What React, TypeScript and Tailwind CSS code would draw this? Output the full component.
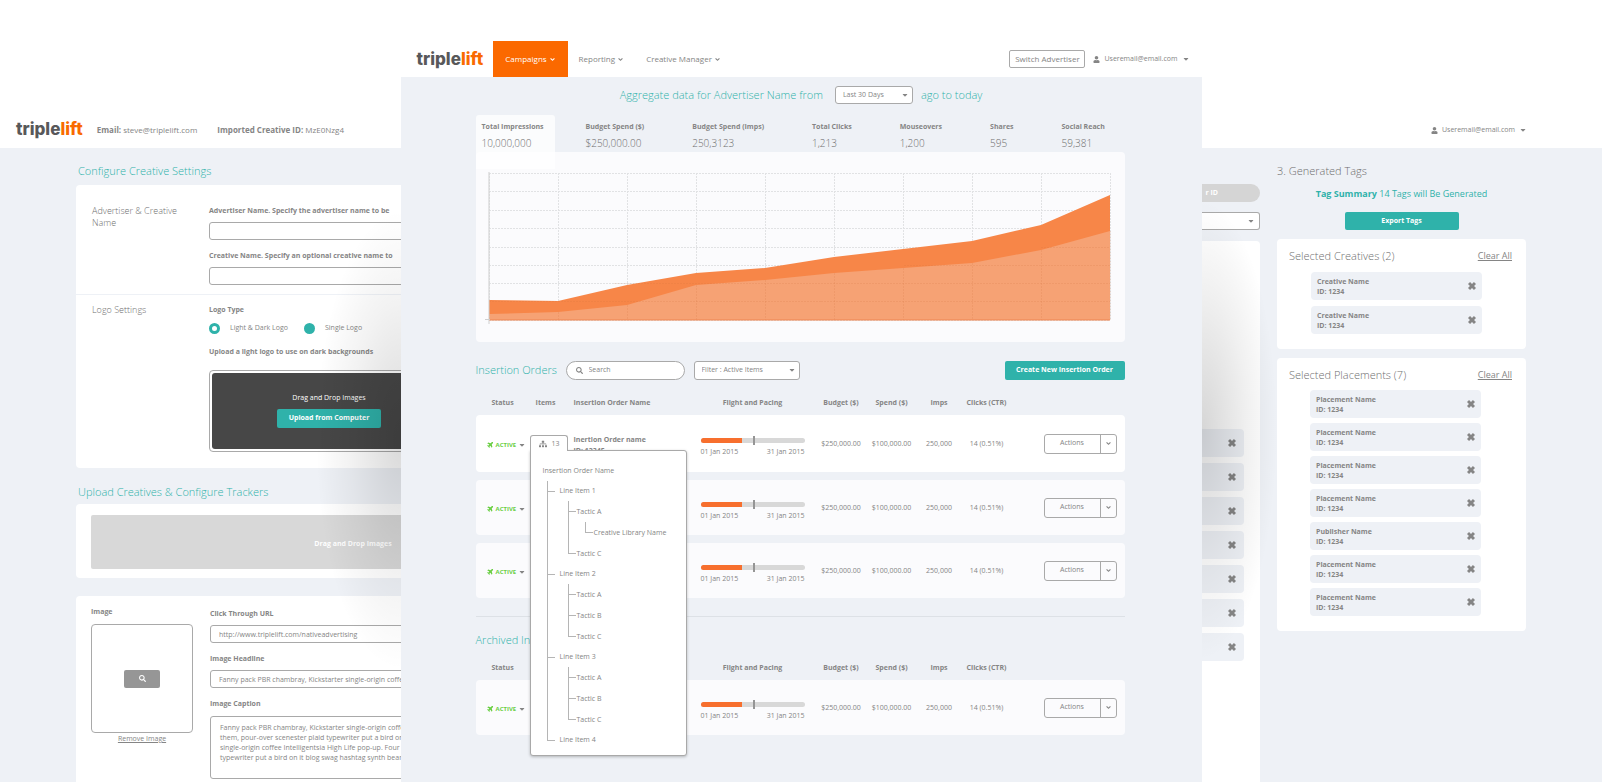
import { FaAngleDown, FaCaretDown, FaPlane, FaSearch, FaSitemap, FaUser } from "react-icons/fa";

const METRICS = [
  { label: "Total Impressions", value: "10,000,000" },
  { label: "Budget Spend ($)", value: "$250,000.00" },
  { label: "Budget Spend (Imps)", value: "250,3123" },
  { label: "Total Clicks", value: "1,213" },
  { label: "Mouseovers", value: "1,200" },
  { label: "Shares", value: "595" },
  { label: "Social Reach", value: "59,381" },
];

const TREE = [
  { name: "Line Item 1", tactics: [{ name: "Tactic A", creative: "Creative Library Name" }, { name: "Tactic C" }] },
  { name: "Line Item 2", tactics: [{ name: "Tactic A" }, { name: "Tactic B" }, { name: "Tactic C" }] },
  { name: "Line Item 3", tactics: [{ name: "Tactic A" }, { name: "Tactic B" }, { name: "Tactic C" }] },
  { name: "Line Item 4", tactics: [] },
] as { name: string; tactics: { name: string; creative?: string }[] }[];

const PLACEMENTS = [
  "Placement Name",
  "Placement Name",
  "Placement Name",
  "Placement Name",
  "Publisher Name",
  "Placement Name",
  "Placement Name",
];

const CAPTION = `Fanny pack PBR chambray, Kickstarter single-origin coffee
them, pour-over scenester plaid typewriter put a bird on it
single-origin coffee Intelligentsia High Life pop-up. Four loko
typewriter put a bird on it blog swag hashtag synth beard`;

function Logo() {
  return (
    <a href="#" className="font-[Inter,sans-serif] text-[17px] leading-5 font-extrabold text-[#58585a]">
      triple<span className="text-[#f96a00]">lift</span>
    </a>
  );
}

function Cross() {
  return (
    <svg viewBox="0 0 14 14" className="size-2" fill="#858585">
      <path d="M3.6 0 7 3.4 10.400 0 14 3.600 10.600 7 14 10.400 10.400 14 7 10.600 3.600 14 0 10.400 3.400 7 0 3.600z" />
    </svg>
  );
}

function UserMenu() {
  return (
    <button className="flex items-center text-[7px] leading-3">
      <FaUser className="mr-1 size-[7px]" />
      Useremail@email.com
      <FaCaretDown className="ml-1 size-2" />
    </button>
  );
}

function Select({ label, value, className }: { label: string; value: string; className: string }) {
  return (
    <div className={`relative ${className}`}>
      <select aria-label={label} className="block size-full appearance-none rounded-[3px] border border-[#a9a9a9] bg-white pl-[7px] text-[7px] font-normal outline-none">
        <option>{value}</option>
      </select>
      <FaCaretDown className="pointer-events-none absolute top-1/2 right-1 size-2 -translate-y-1/2" />
    </div>
  );
}

function Field({ id, label, value }: { id: string; label: string; value?: string }) {
  return (
    <div>
      <label htmlFor={id} className="block text-[7px] leading-3 font-bold">{label}</label>
      <input id={id} defaultValue={value} className="mt-[5px] block h-[18px] w-full rounded-[3px] border border-[#a9a9a9] bg-white px-2 text-[7px] outline-none" />
    </div>
  );
}

function CreativeSettings() {
  return (
    <section className="relative flex min-w-0 flex-col overflow-hidden whitespace-nowrap">
      <header className="flex h-[148px] shrink-0 items-end gap-5 bg-white pb-[9px] pl-4">
        <Logo />
        <p className="-ml-1.5 pb-[3px] text-[8px] leading-3"><b>Email:</b> steve@triplelift.com</p>
        <p className="pb-[3px] text-[8px] leading-3"><b>Imported Creative ID:</b> MzE0Nzg4</p>
      </header>

      <div className="flex w-[560px] flex-1 flex-col pl-19">
        <h2 className="mt-[15px] pl-0.5 text-[11px] leading-4 font-light text-[#2fb2aa]">Configure Creative Settings</h2>
        <div className="mt-[6px] rounded-[4px] bg-white">
          <div className="flex h-[109px] pt-5 pl-4">
            <h3 className="w-[117px] text-[9px] leading-3 font-light text-[#6f6f6f]">Advertiser &amp; Creative<br />Name</h3>
            <div className="flex w-60 flex-col gap-[10px]">
              <Field id="advertiser" label="Advertiser Name. Specify the advertiser name to be" />
              <Field id="creative" label="Creative Name. Specify an optional creative name to" />
            </div>
          </div>
          <div className="flex h-[174px] border-t border-[#eef1f6] pt-[9px] pl-4">
            <h3 className="w-[117px] text-[9px] leading-3 font-light text-[#6f6f6f]">Logo Settings</h3>
            <div className="w-60">
              <p className="text-[7px] leading-3 font-bold">Logo Type</p>
              <div className="mt-1.5 flex items-center text-[7px] leading-3">
                <label className="flex w-[95px] items-center gap-2.5">
                  <input type="radio" name="logo" defaultChecked className="size-[11px] appearance-none rounded-full border-[3px] border-[#2fb2aa] bg-white" />
                  Light &amp; Dark Logo
                </label>
                <label className="flex items-center gap-2.5">
                  <input type="radio" name="logo" className="size-[11px] appearance-none rounded-full bg-[#2fb2aa]" />
                  Single Logo
                </label>
              </div>
              <p className="mt-3 text-[7px] leading-3 font-bold">Upload a light logo to use on dark backgrounds</p>
              <div className="mt-3 rounded-[4px] border border-[#a9a9a9] p-0.5">
                <div className="flex h-[76px] flex-col items-center rounded-[3px] bg-[#474747] pt-[19px] text-white">
                  <p className="text-[7px] leading-3">Drag and Drop Images</p>
                  <button className="mt-[5px] h-[19px] w-[104px] rounded-[2px] bg-[#2fb2aa] text-[7px] font-bold">Upload from Computer</button>
                </div>
              </div>
            </div>
          </div>
        </div>

        <h2 className="mt-4 pl-0.5 text-[11px] leading-4 font-light text-[#2fb2aa]">Upload Creatives &amp; Configure Trackers</h2>
        <div className="mt-1 h-[74px] rounded-[4px] bg-white pt-[11px] pl-[15px]">
          <div className="flex h-[54px] w-[524px] items-center justify-center rounded-[2px] bg-[#d8d8d8] pt-1 text-[7px] font-bold text-white">Drag and Drop Images</div>
        </div>

        <div className="mt-[18px] flex flex-1 rounded-tl-[4px] bg-white pt-[10px] pl-[15px]">
          <div className="w-[119px]">
            <p className="text-[7px] leading-3 font-bold">Image</p>
            <div className="mt-[6px] flex h-[109px] w-[102px] items-center justify-center rounded-[4px] border border-[#a9a9a9]">
              <button aria-label="Preview image" className="flex h-[18px] w-[36px] items-center justify-center rounded-[2px] bg-[#969696] text-white">
                <FaSearch className="size-[7px]" />
              </button>
            </div>
            <a href="#" className="block w-[102px] text-center text-[7px] leading-3 underline">Remove Image</a>
          </div>
          <div className="flex w-[340px] flex-col gap-[10px] pt-0.5">
            <Field id="url" label="Click Through URL" value="http://www.triplelift.com/nativeadvertising" />
            <Field id="headline" label="Image Headline" value="Fanny pack PBR chambray, Kickstarter single-origin coffee" />
            <div>
              <label htmlFor="caption" className="block text-[7px] leading-3 font-bold">Image Caption</label>
              <textarea id="caption" defaultValue={CAPTION} className="mt-[6px] block h-[63px] w-full resize-none overflow-hidden rounded-[3px] border border-[#a9a9a9] px-[9px] py-[6px] text-[7px] leading-[10px] outline-none" />
            </div>
          </div>
        </div>
      </div>
      <div className="pointer-events-none absolute inset-0 bg-[radial-gradient(85px_230px_at_100%_440px,rgba(0,0,0,0.15),rgba(0,0,0,0.05)_60%,transparent)]" />
    </section>
  );
}

// monthly totals, measured down from the top of the chart card
const TOTAL = [148, 149, 133, 121, 116, 105, 97, 89, 73, 43];
const SPENT = [162, 160, 153, 133, 128, 121, 116, 111, 98, 79];

function AreaChart() {
  const x = (i: number) => 13 + i * 69;
  const area = (ys: number[]) => ys.map((y, i) => `${x(i)},${y}`).join(" ") + " 634,168 13,168";
  return (
    <svg viewBox="0 0 649 190" className="block w-full" role="img" aria-label="Impressions over time">
      <g stroke="#e1e2e4" strokeDasharray="2 1">
        {[21, 39, 58, 76, 95, 113, 131, 149, 168].map((y) => (
          <line key={y} x1="13" x2="634" y1={y + 0.5} y2={y + 0.5} />
        ))}
        {TOTAL.map((_, i) => (
          <line key={i} x1={x(i) + 0.5} x2={x(i) + 0.5} y1="21" y2="168" />
        ))}
      </g>
      <polygon points={area(TOTAL)} fill="#f78648" />
      <polygon points={area(SPENT)} fill="#f6a274" />
      <g stroke="#c86a34" strokeOpacity="0.15" strokeDasharray="2 1">
        <path d="M345 149.500H634M13 149.500H345M138 131.500H634M428 113.500H634M565 95.500H634" />
        {TOTAL.map((_, i) => (
          <line key={i} x1={x(i) + 0.5} x2={x(i) + 0.5} y1={SPENT[i]} y2="168" />
        ))}
      </g>
      <path d="M13 168H634" stroke="#ee8450" />
      <path d="M13 20V172M9 167.500H14" stroke="#cfcfcf" />
    </svg>
  );
}

function ItemsPopup() {
  const li = "relative before:absolute before:top-0 before:left-0 before:h-full before:w-px before:bg-[#b5b5b5] last:before:h-[10px] after:absolute after:top-[10px] after:left-0 after:h-px after:w-2 after:bg-[#b5b5b5]";
  return (
    <div className="absolute top-5 left-0 z-10 w-[157px] text-left">
      <button className="relative z-10 -mb-px flex h-4 w-[38px] items-center gap-[5px] rounded-t-[3px] border border-b-0 border-[#a9a9a9] bg-white pl-2 text-[7px] leading-3">
        <FaSitemap className="size-2" />
        13
      </button>
      <div className="rounded-[3px] rounded-tl-none border border-[#a9a9a9] bg-white px-3 pt-[9px] pb-[5px] text-[7px] leading-[21px] shadow-[0_1px_3px_rgba(0,0,0,0.25)]">
        <p>Insertion Order Name</p>
        <ul className="ml-1">
          {TREE.map((line) => (
            <li key={line.name} className={`${li} pl-[13px]`}>
              <p className="leading-5">{line.name}</p>
              <ul className="ml-2">
                {line.tactics.map((tactic) => (
                  <li key={tactic.name} className={`${li} pl-[9px]`}>
                    <p>{tactic.name}</p>
                    {tactic.creative && (
                      <ul className="ml-2">
                        <li className={`${li} pl-[9px]`}>{tactic.creative}</li>
                      </ul>
                    )}
                  </li>
                ))}
              </ul>
            </li>
          ))}
        </ul>
      </div>
    </div>
  );
}

function OrdersTable({ rows, open }: { rows: number; open?: boolean }) {
  return (
    <table className="w-full table-fixed border-separate border-spacing-x-0 border-spacing-y-2 text-center text-[7px]">
      <colgroup>
        <col className="w-[54px]" />
        <col className="w-[32px]" />
        <col />
        <col className="w-[126px]" />
        <col className="w-[51px]" />
        <col className="w-[50px]" />
        <col className="w-[45px]" />
        <col className="w-[50px]" />
        <col className="w-[113px]" />
      </colgroup>
      <thead>
        <tr className="leading-2">
          <th>Status</th>
          <th aria-label="Items">{open && "Items"}</th>
          <th aria-label="Insertion Order Name" className="pl-3 text-left">{open && "Insertion Order Name"}</th>
          <th>Flight and Pacing</th>
          <th>Budget ($)</th>
          <th>Spend ($)</th>
          <th>Imps</th>
          <th>Clicks (CTR)</th>
          <th aria-label="Actions" />
        </tr>
      </thead>
      <tbody>
        {Array.from({ length: rows }, (_, i) => (
          <tr key={i} className={open && i === 0 ? "h-[57px] *:bg-white *:pt-0.5" : "h-[55px] *:bg-[#fbfbfd] *:pt-0.5"}>
            <td className="rounded-l-[4px]">
              <button className="ml-[11px] flex items-center text-[6px] leading-3 font-bold text-[#6bcf45]">
                <FaPlane className="mr-0.5 size-[7px] -rotate-45" />
                ACTIVE
                <FaCaretDown className="ml-0.5 size-2 text-[#858585]" />
              </button>
            </td>
            <td className="relative">{open && i === 0 && <ItemsPopup />}</td>
            <td className="pl-3 text-left leading-[11px]">
              {open && i === 0 && (
                <>
                  <b className="block">Inertion Order name</b>
                  <b className="block">ID: 12345</b>
                </>
              )}
            </td>
            <td className="px-[11px]">
              <div className="relative mt-[6px] h-[5px] rounded-full bg-[#d8d8d8]">
                <div className="h-full w-2/5 rounded-l-full bg-[#f76f2e]" />
                <div className="absolute -top-0.5 left-1/2 h-[9px] w-0.5 bg-[#959595]" />
              </div>
              <div className="mt-[3px] flex justify-between leading-3">
                <span>01 Jan 2015</span>
                <span>31 Jan 2015</span>
              </div>
            </td>
            <td>$250,000.00</td>
            <td>$100,000.00</td>
            <td>250,000</td>
            <td>14 (0.51%)</td>
            <td className="rounded-r-[4px] pr-2 pb-0.5">
              <div className="ml-auto flex h-5 w-[73px] rounded-[3px] border border-[#a9a9a9]">
                <button className="flex-1">Actions</button>
                <button aria-label="More actions" className="flex w-4 items-center justify-center border-l border-[#a9a9a9]">
                  <FaAngleDown className="size-[7px]" />
                </button>
              </div>
            </td>
          </tr>
        ))}
      </tbody>
    </table>
  );
}

function Campaigns() {
  return (
    <section className="relative z-10 min-w-0 bg-[#eef1f6] whitespace-nowrap">
      <header className="bg-white pt-[41px]">
        <div className="flex h-9 items-center pr-3 pl-4">
          <Logo />
          <nav className="ml-[10px] flex h-full items-center text-[8px]">
            <a href="#" className="flex h-full items-center gap-0.5 bg-[#fb6900] px-3 text-white">Campaigns <FaAngleDown className="size-[7px]" /></a>
            <a href="#" className="flex items-center gap-0.5 px-[11px]">Reporting <FaAngleDown className="size-[7px]" /></a>
            <a href="#" className="flex items-center gap-0.5 px-[11px]">Creative Manager <FaAngleDown className="size-[7px]" /></a>
          </nav>
          <button className="mr-2 ml-auto h-[18px] w-19 rounded-[2px] border border-[#a9a9a9] text-[8px]">Switch Advertiser</button>
          <UserMenu />
        </div>
      </header>

      <div className="pr-[77px] pl-[75px]">
        <div className="mt-[9px] flex h-[18px] items-center justify-center pl-0.5 text-[11px] font-light text-[#2fb2aa]">
          Aggregate data for Advertiser Name from
          <Select label="Period" value="Last 30 Days" className="mr-2 ml-3 h-[18px] w-[78px] text-[#858585]" />
          ago to today
        </div>

        <dl className="mt-[11px] flex h-[37px] gap-12">
          {METRICS.map((metric, i) => (
            <div key={metric.label} className={i === 0 ? "z-10 -mr-[17px] h-[54px] w-[79px] rounded-t-[3px] bg-white/75 pt-[6px] pl-[6px]" : "pt-[6px]"}>
              <dt className="text-[7px] leading-3 font-bold">{metric.label}</dt>
              <dd className="mt-1 text-[10px] leading-3 font-light text-[#6f6f6f]">{metric.value}</dd>
            </div>
          ))}
        </dl>
        <div className="rounded-[4px] bg-[#fbfbfd]">
          <AreaChart />
        </div>

        <div className="mt-[18px] flex h-5 items-center">
          <h2 className="w-20 text-[11px] font-light text-[#2fb2aa]">Insertion Orders</h2>
          <label className="ml-[10px] flex h-[19px] w-[119px] items-center gap-1.5 rounded-full border border-[#a9a9a9] bg-white pl-[9px]">
            <FaSearch className="size-[7px]" />
            <input placeholder="Search" aria-label="Search" className="w-20 text-[7px] outline-none placeholder:text-[#858585]" />
          </label>
          <Select label="Filter" value="Filter : Active Items" className="ml-[9px] h-[19px] w-[106px]" />
          <button className="ml-auto h-[19px] w-[120px] rounded-[2px] bg-[#2fb2aa] text-[7px] font-bold text-white">Create New Insertion Order</button>
        </div>
        <div className="mt-[11px]">
          <OrdersTable rows={3} open />
        </div>

        <hr className="mt-[10px] border-[#dde1e6]" />
        <h2 className="mt-[15px] mb-2 text-[11px] leading-4 font-light text-[#2fb2aa]">Archived Insertion Orders</h2>
        <OrdersTable rows={1} />
      </div>
    </section>
  );
}

function TagItem({ name }: { name: string }) {
  return (
    <li className="flex h-7 w-[171px] items-center justify-between rounded-[4px] bg-[#eef1f6] pr-[6px] pl-[6px] text-[7px] leading-[10px] font-bold">
      <span className="pt-0.5">{name}<br />ID: 1234</span>
      <button aria-label="Remove"><Cross /></button>
    </li>
  );
}

function GeneratedTags() {
  return (
    <section className="relative min-w-0 overflow-hidden whitespace-nowrap">
      <header className="flex h-[148px] items-end justify-end bg-white pr-[75px] pb-3">
        <UserMenu />
      </header>
      <div className="flex min-h-[634px] justify-between pr-[76px]">
        <div className="flex w-[58px] flex-col">
          <button className="mt-9 h-[18px] rounded-r-full bg-[#d5d5d5] pl-1 text-left text-[7px] font-bold text-white">r ID</button>
          <div className="relative mt-[10px] h-[18px] rounded-r-[3px] border border-l-0 border-[#a9a9a9] bg-white">
            <FaCaretDown className="absolute top-1 right-1 size-2" />
          </div>
          <ul className="mt-[11px] flex flex-1 flex-col gap-[6px] rounded-tr-[4px] bg-white pt-[188px] pr-4">
            {Array.from({ length: 7 }, (_, i) => (
              <li key={i} className="flex h-7 items-center justify-end rounded-r-[4px] bg-[#eef1f6] pr-2">
                <button aria-label="Remove"><Cross /></button>
              </li>
            ))}
          </ul>
        </div>

        <div className="w-[249px]">
          <h2 className="mt-[15px] text-[11px] leading-4 font-light text-[#6f6f6f]">3. Generated Tags</h2>
          <p className="mt-[9px] text-center text-[9px] leading-3 text-[#2fb2aa]"><b>Tag Summary</b> 14 Tags will Be Generated</p>
          <button className="mx-auto mt-3 block h-[18px] w-[114px] rounded-[2px] bg-[#2fb2aa] text-[7px] font-bold text-white">Export Tags</button>

          <div className="mt-[9px] rounded-[4px] bg-white pt-[9px] pr-[14px] pb-[15px] pl-3">
            <div className="flex items-center justify-between">
              <h3 className="text-[11px] leading-4 font-light text-[#6f6f6f]">Selected Creatives (2)</h3>
              <a href="#" className="text-[9px] leading-4 underline">Clear All</a>
            </div>
            <ul className="mt-2 ml-[22px] flex flex-col gap-[6px]">
              <TagItem name="Creative Name" />
              <TagItem name="Creative Name" />
            </ul>
          </div>

          <div className="mt-[9px] rounded-[4px] bg-white pt-[9px] pr-[14px] pb-[15px] pl-3">
            <div className="flex items-center justify-between">
              <h3 className="text-[11px] leading-4 font-light text-[#6f6f6f]">Selected Placements (7)</h3>
              <a href="#" className="text-[9px] leading-4 underline">Clear All</a>
            </div>
            <ul className="mt-[7px] ml-[21px] flex flex-col gap-[5px]">
              {PLACEMENTS.map((name, i) => (
                <TagItem key={i} name={name} />
              ))}
            </ul>
          </div>
        </div>
      </div>
      <div className="pointer-events-none absolute inset-0 bg-[radial-gradient(75px_230px_at_0_430px,rgba(0,0,0,0.16),rgba(0,0,0,0.06)_60%,transparent)]" />
    </section>
  );
}

export default function App() {
  return (
    <main className="grid min-h-screen grid-cols-[1fr_2fr_1fr] overflow-hidden bg-[#eef1f6] font-['Open_Sans',sans-serif] text-[#858585]">
      <CreativeSettings />
      <Campaigns />
      <GeneratedTags />
    </main>
  );
}
